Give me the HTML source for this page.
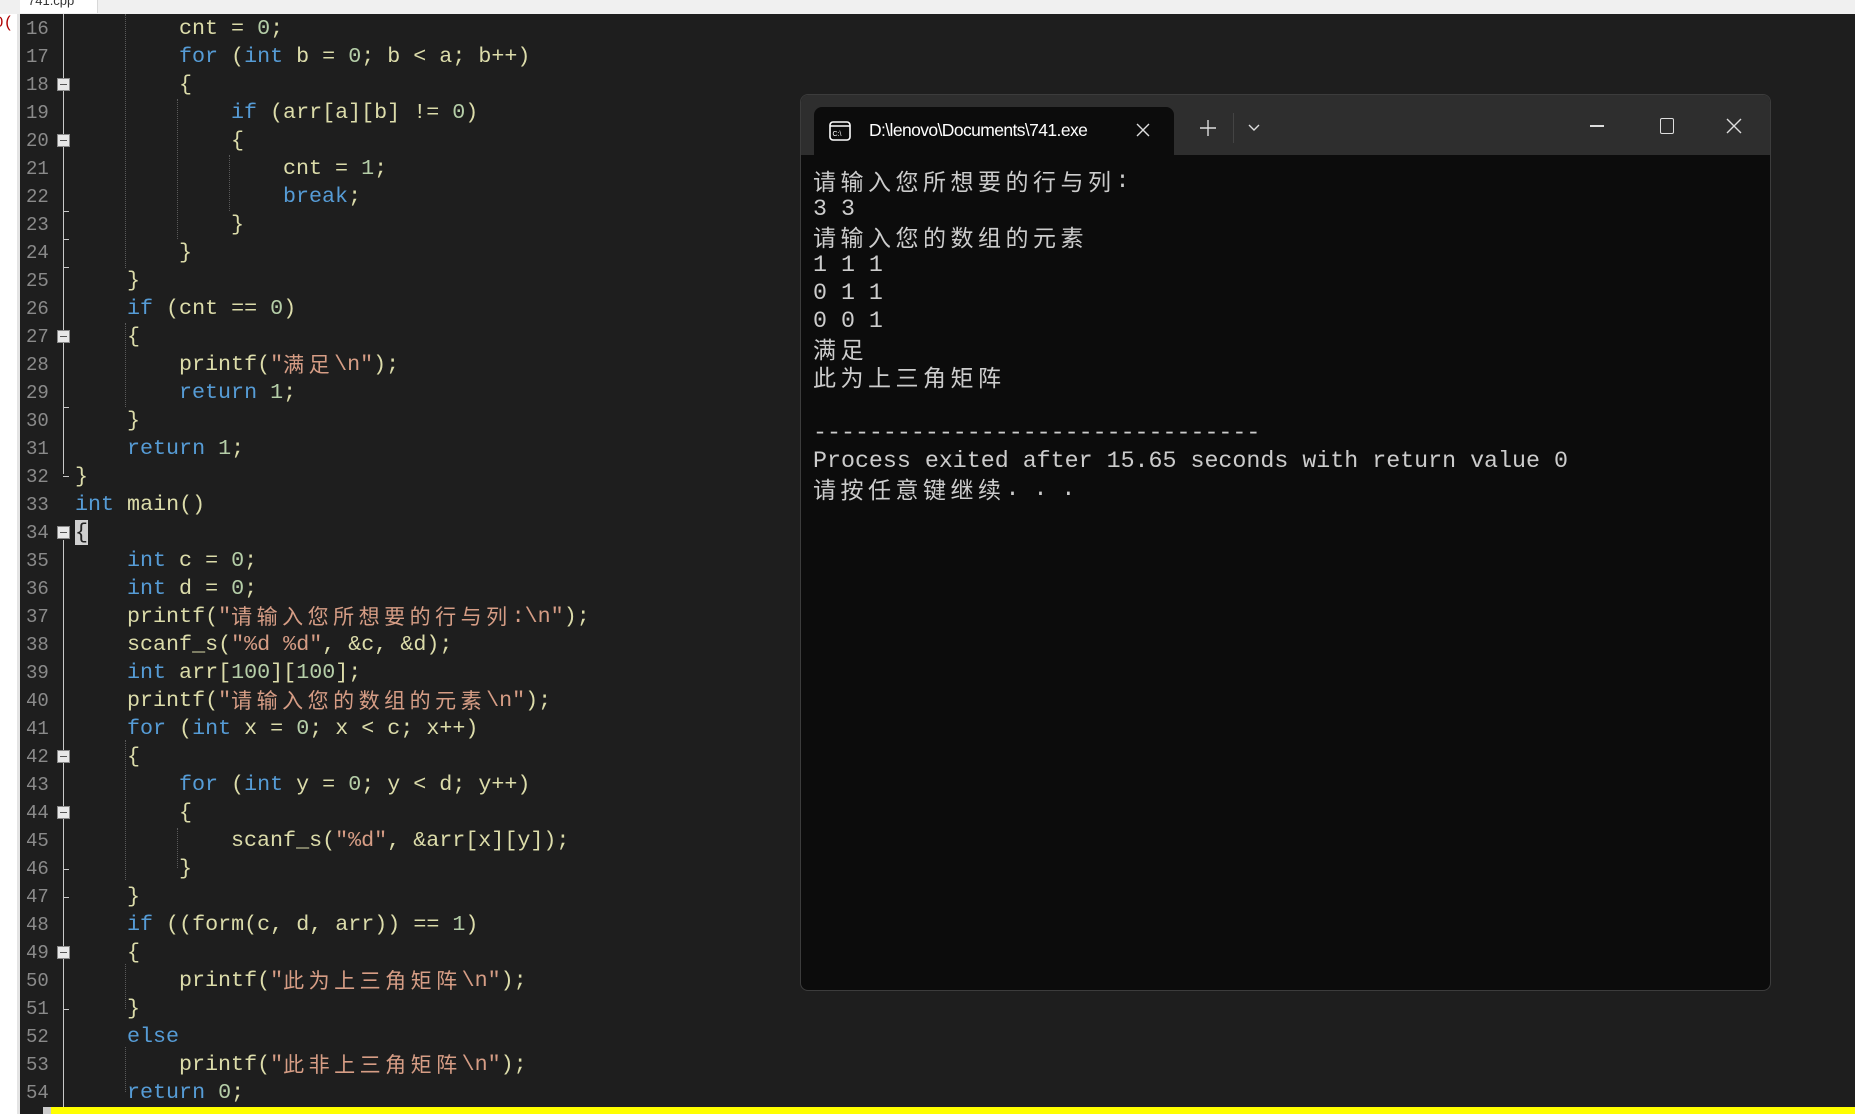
<!DOCTYPE html>
<html><head><meta charset="utf-8"><style>
*{margin:0;padding:0;box-sizing:border-box}
body{width:1855px;height:1114px;overflow:hidden;background:#1e1e1e;position:relative;font-family:"Liberation Mono","Noto Sans CJK SC",monospace}
.top{position:absolute;left:0;top:0;width:1855px;height:14px;background:#f0f0f0}
.ftab{position:absolute;left:20px;top:0;width:78px;height:13px;background:#fff;border-right:1px solid #d8d8d8;font:13px "Liberation Sans",sans-serif;color:#333;line-height:2px;padding-left:8px;overflow:hidden}
.lstrip{position:absolute;left:0;top:14px;width:20px;height:1100px;background:#fff;border-right:3px solid #e4e4e4}
.red{position:absolute;left:-6px;top:14px;color:#b00000;font:16px "Liberation Mono",monospace}
.fl{position:absolute;left:63px;width:1px;background:#c8c8c8}
.ln{position:absolute;left:26px;width:28px;color:#8a8a8a;font-size:19px;line-height:28px}
.fb{position:absolute;left:57px;width:13px;height:13px;background:#e8e8e8;border:1px solid #888}
.fb:after{content:"";position:absolute;left:2px;top:5px;width:7px;height:1px;background:#555}
.tk{position:absolute;left:63px;width:6px;height:1px;background:#c8c8c8}
.cl{position:absolute;white-space:pre;font-size:21.7px;line-height:28px;height:28px;color:#dcdcaa}
.k{color:#569cd6}.n{color:#b5cea8}.s{color:#d69d85}
.c{font-family:"Noto Sans CJK SC",sans-serif;font-size:21px;letter-spacing:4.5px;display:inline-block;vertical-align:top;height:28px;line-height:27px}
.g{position:absolute;width:0;border-left:1px dotted #5a5a5a}
.yl{position:absolute;left:51px;top:1107px;width:1804px;height:7px;background:#ffff00}
.ym{position:absolute;left:43px;top:1107px;width:8px;height:7px;background:#ccc}
.win{position:absolute;left:800px;top:94px;width:971px;height:897px;background:#0c0c0c;border:1px solid #3c3c3c;border-radius:8px;overflow:hidden}
.tb{position:absolute;left:0;top:0;width:100%;height:60px;background:#2e2e2e}
.tab{position:absolute;left:13px;top:12px;width:360px;height:48px;background:#0c0c0c;border-radius:8px 8px 0 0}
.tt{position:absolute;left:55px;top:13px;color:#fff;font:17.5px "Liberation Sans",sans-serif;white-space:nowrap;width:245px;overflow:hidden;letter-spacing:-0.6px}
.out{position:absolute;left:12px;top:72px;color:#cccccc;font-size:23.3px}
.out div{height:28px;line-height:28px;white-space:pre}
.out .c{font-size:23px;letter-spacing:4.5px;line-height:27px}
</style></head><body>
<div class="top"></div><div class="ftab">741.cpp</div>
<div class="lstrip"></div>
<div class="red">0(</div>

<div class="fl" style="top:14px;height:460px"></div>
<div class="fl" style="top:540px;height:574px"></div>
<div class="tk" style="top:211px"></div><div class="tk" style="top:239px"></div><div class="tk" style="top:267px"></div><div class="tk" style="top:407px"></div><div class="tk" style="top:476px"></div><div class="tk" style="top:869px"></div><div class="tk" style="top:897px"></div><div class="tk" style="top:1009px"></div>

<div class="g" style="left:125px;top:14px;height:254px"></div>
<div class="g" style="left:177px;top:99px;height:140px"></div>
<div class="g" style="left:229px;top:155px;height:56px"></div>
<div class="g" style="left:125px;top:323px;height:84px"></div>
<div class="g" style="left:125px;top:740px;height:140px"></div>
<div class="g" style="left:177px;top:828px;height:40px"></div>
<div class="g" style="left:125px;top:964px;height:45px"></div>
<div class="g" style="left:125px;top:1047px;height:45px"></div>

<div id="code"></div>
<div class="ym"></div><div class="yl"></div>

<div class="win">
 <div class="tb"></div>
 <div class="tab">
  <svg style="position:absolute;left:15px;top:14px" width="22" height="20" viewBox="0 0 22 20"><rect x="1" y="1" width="20" height="18" rx="3" fill="none" stroke="#fff" stroke-width="1.6"/><line x1="1" y1="5" x2="21" y2="5" stroke="#fff" stroke-width="1.4"/><text x="3.5" y="15" font-size="7" fill="#fff" font-family="Liberation Sans">C:\</text></svg>
  <div class="tt">D:\lenovo\Documents\741.exe</div>
  <svg style="position:absolute;left:322px;top:16px" width="14" height="14"><path d="M1 1L13 13M13 1L1 13" stroke="#ddd" stroke-width="1.4"/></svg>
 </div>
 <svg style="position:absolute;left:398px;top:24px" width="18" height="18"><path d="M9 1V17M1 9H17" stroke="#ddd" stroke-width="1.4"/></svg>
 <div style="position:absolute;left:432px;top:18px;width:1px;height:30px;background:#444"></div>
 <svg style="position:absolute;left:446px;top:28px" width="14" height="10"><path d="M2 2L7 7L12 2" stroke="#ddd" stroke-width="1.4" fill="none"/></svg>
 <div style="position:absolute;left:789px;top:30px;width:14px;height:1.5px;background:#ddd"></div>
 <div style="position:absolute;left:859px;top:23px;width:14px;height:16px;border:1.5px solid #ddd;border-radius:2px"></div>
 <svg style="position:absolute;left:925px;top:23px" width="16" height="16"><path d="M1 1L15 15M15 1L1 15" stroke="#ddd" stroke-width="1.4"/></svg>
 <div class="out">
<div><span class="c">请输入您所想要的行与列</span>:</div>
<div>3 3</div>
<div><span class="c">请输入您的数组的元素</span></div>
<div>1 1 1</div>
<div>0 1 1</div>
<div>0 0 1</div>
<div><span class="c">满足</span></div>
<div><span class="c">此为上三角矩阵</span></div>
<div> </div>
<div>--------------------------------</div>
<div>Process exited after 15.65 seconds with return value 0</div>
<div><span class="c">请按任意键继续</span>. . .</div>
 </div>
</div>

<script>
var L={
16:[2,'cnt = <span class="n">0</span>;'],
17:[2,'<span class="k">for</span> (<span class="k">int</span> b = <span class="n">0</span>; b &lt; a; b++)'],
18:[2,'{'],
19:[3,'<span class="k">if</span> (arr[a][b] != <span class="n">0</span>)'],
20:[3,'{'],
21:[4,'cnt = <span class="n">1</span>;'],
22:[4,'<span class="k">break</span>;'],
23:[3,'}'],24:[2,'}'],25:[1,'}'],
26:[1,'<span class="k">if</span> (cnt == <span class="n">0</span>)'],
27:[1,'{'],
28:[2,'printf(<span class="s">"<span class="c">满足</span>\\n"</span>);'],
29:[2,'<span class="k">return</span> <span class="n">1</span>;'],
30:[1,'}'],
31:[1,'<span class="k">return</span> <span class="n">1</span>;'],
32:[0,'}'],
33:[0,'<span class="k">int</span> main()'],
34:[0,'<span style="background:#d0d0d0;color:#222">{</span>'],
35:[1,'<span class="k">int</span> c = <span class="n">0</span>;'],
36:[1,'<span class="k">int</span> d = <span class="n">0</span>;'],
37:[1,'printf(<span class="s">"<span class="c">请输入您所想要的行与列</span>:\\n"</span>);'],
38:[1,'scanf_s(<span class="s">"%d %d"</span>, &amp;c, &amp;d);'],
39:[1,'<span class="k">int</span> arr[<span class="n">100</span>][<span class="n">100</span>];'],
40:[1,'printf(<span class="s">"<span class="c">请输入您的数组的元素</span>\\n"</span>);'],
41:[1,'<span class="k">for</span> (<span class="k">int</span> x = <span class="n">0</span>; x &lt; c; x++)'],
42:[1,'{'],
43:[2,'<span class="k">for</span> (<span class="k">int</span> y = <span class="n">0</span>; y &lt; d; y++)'],
44:[2,'{'],
45:[3,'scanf_s(<span class="s">"%d"</span>, &amp;arr[x][y]);'],
46:[2,'}'],47:[1,'}'],
48:[1,'<span class="k">if</span> ((form(c, d, arr)) == <span class="n">1</span>)'],
49:[1,'{'],
50:[2,'printf(<span class="s">"<span class="c">此为上三角矩阵</span>\\n"</span>);'],
51:[1,'}'],
52:[1,'<span class="k">else</span>'],
53:[2,'printf(<span class="s">"<span class="c">此非上三角矩阵</span>\\n"</span>);'],
54:[1,'<span class="k">return</span> <span class="n">0</span>;']};
var fb=[18,20,27,34,42,44,49],h='';
for(var n=16;n<=54;n++){var t=15+(n-16)*28;
h+='<div class="ln" style="top:'+t+'px">'+n+'</div>';
if(fb.indexOf(n)>=0)h+='<div class="fb" style="top:'+(t+7)+'px"></div>';
h+='<div class="cl" style="top:'+t+'px;left:'+(75+52*L[n][0])+'px">'+L[n][1]+'</div>';}
document.getElementById('code').innerHTML=h;
</script>
</body></html>
